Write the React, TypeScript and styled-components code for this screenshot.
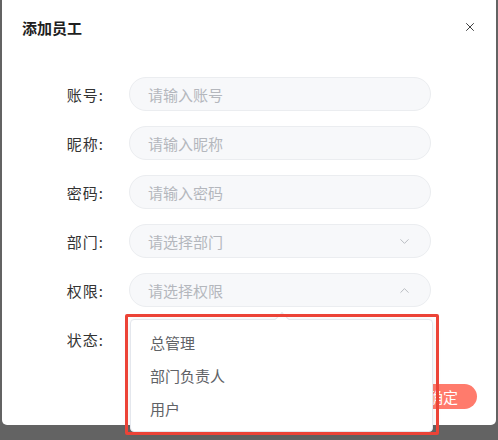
import styled, { createGlobalStyle } from "styled-components";
import { ChevronDown, ChevronUp, X } from "lucide-react";

const GlobalStyle = createGlobalStyle`
    html, body {
        margin: 0;
        padding: 0;
        background: #636363;
        font-family: "Noto Sans CJK SC", "Noto Sans", sans-serif;
    }
    * {
        box-sizing: border-box;
    }
`;

const FIELDS = [
    { label: "账号", placeholder: "请输入账号" },
    { label: "昵称", placeholder: "请输入昵称" },
    { label: "密码", placeholder: "请输入密码" },
];

const ROLE_OPTIONS = ["总管理", "部门负责人", "用户"];

function App() {
    return (
        <>
            <GlobalStyle />
            <Mask>
                <Dialog>
                    <Header>
                        <Title>添加员工</Title>
                        <CloseButton>
                            <X size={14} strokeWidth={1.6} />
                        </CloseButton>
                    </Header>
                    <Form>
                        {FIELDS.map((field) => (
                            <Row key={field.label}>
                                <Label>{field.label}:</Label>
                                <Field>
                                    <Placeholder>{field.placeholder}</Placeholder>
                                </Field>
                            </Row>
                        ))}
                        <Row>
                            <Label>部门:</Label>
                            <Field>
                                <Placeholder>请选择部门</Placeholder>
                                <ChevronDown size={15} strokeWidth={1.4} />
                            </Field>
                        </Row>
                        <Row>
                            <Label>权限:</Label>
                            <SelectWrap>
                                <Field>
                                    <Placeholder>请选择权限</Placeholder>
                                    <ChevronUp size={15} strokeWidth={1.4} />
                                </Field>
                                <Dropdown>
                                    <Arrow />
                                    {ROLE_OPTIONS.map((option) => (
                                        <Option key={option}>{option}</Option>
                                    ))}
                                    <Highlight />
                                </Dropdown>
                            </SelectWrap>
                        </Row>
                        <Row>
                            <Label>状态:</Label>
                            <Switch $on />
                        </Row>
                    </Form>
                    <Footer>
                        <Button>取消</Button>
                        <Button $primary>确定</Button>
                    </Footer>
                </Dialog>
            </Mask>
        </>
    );
}

const Mask = styled.div`
    height: 440px;
    padding: 0 2px;
`;

const Dialog = styled.div`
    height: 425px;
    background: #fff;
    border-radius: 0 0 5px 5px;
    display: flex;
    flex-direction: column;
`;

const Header = styled.div`
    height: 54px;
    padding: 0 19px 0 20px;
    display: flex;
    align-items: center;
    justify-content: space-between;
`;

const Title = styled.div`
    font-size: 15px;
    font-weight: 700;
    color: #1f1f1f;
`;

const CloseButton = styled.div`
    width: 14px;
    height: 14px;
    display: flex;
    color: #303133;
`;

const Form = styled.div`
    margin-top: 23px;
    padding-left: 38px;
    display: flex;
    flex-direction: column;
    gap: 15px;
`;

const Row = styled.div`
    display: flex;
    align-items: center;
    height: 34px;
`;

const Label = styled.div`
    width: 64px;
    margin-right: 25px;
    text-align: right;
    font-size: 15px;
    color: #333;
    letter-spacing: 1px;
`;

const SelectWrap = styled.div`
    position: relative;
`;

const Field = styled.div`
    width: 302px;
    height: 34px;
    padding: 0 18px 0 18px;
    display: flex;
    align-items: center;
    justify-content: space-between;
    background: #f7f8fa;
    border: 1px solid #ebedf0;
    border-radius: 17px;
    color: #b0b3b9;
`;

const Placeholder = styled.span`
    font-size: 15px;
    color: #b4b7bd;
`;

const Dropdown = styled.div`
    position: absolute;
    top: 46px;
    left: 1px;
    width: 303px;
    padding: 6px 0;
    background: #fff;
    border: 1px solid #e4e7ed;
    border-radius: 4px;
    box-shadow: 0 2px 10px rgba(0, 0, 0, 0.08);
    z-index: 10;
`;

const Arrow = styled.div`
    position: absolute;
    top: -6px;
    left: 146px;
    width: 10px;
    height: 10px;
    background: #fff;
    border-left: 1px solid #e4e7ed;
    border-top: 1px solid #e4e7ed;
    transform: rotate(45deg);
`;

const Option = styled.div`
    height: 33px;
    padding-left: 19px;
    display: flex;
    align-items: center;
    font-size: 15px;
    color: #606266;
`;

const Highlight = styled.div`
    position: absolute;
    top: -6px;
    left: -6px;
    width: 314px;
    height: 121px;
    border: 3px solid #ec4337;
    border-radius: 2px;
    pointer-events: none;
`;

const Switch = styled.span<{ $on?: boolean }>`
    position: relative;
    width: 40px;
    height: 20px;
    margin-left: 8px;
    border-radius: 10px;
    background: ${(p) => (p.$on ? "#ff7b6c" : "#dcdfe6")};
    &::after {
        content: "";
        position: absolute;
        top: 2px;
        left: ${(p) => (p.$on ? "22px" : "2px")};
        width: 16px;
        height: 16px;
        border-radius: 50%;
        background: #fff;
    }
`;

const Footer = styled.div`
    margin-top: 28px;
    padding-right: 19px;
    display: flex;
    justify-content: flex-end;
    gap: 12px;
`;

const Button = styled.div<{ $primary?: boolean }>`
    height: 25px;
    padding: 0 19px;
    display: flex;
    align-items: center;
    border-radius: 13px;
    font-size: 15px;
    background: ${(p) => (p.$primary ? "#ff7b6c" : "#fff")};
    color: ${(p) => (p.$primary ? "#fff" : "#606266")};
    border: ${(p) => (p.$primary ? "none" : "1px solid #dcdfe6")};
`;

export default App;
